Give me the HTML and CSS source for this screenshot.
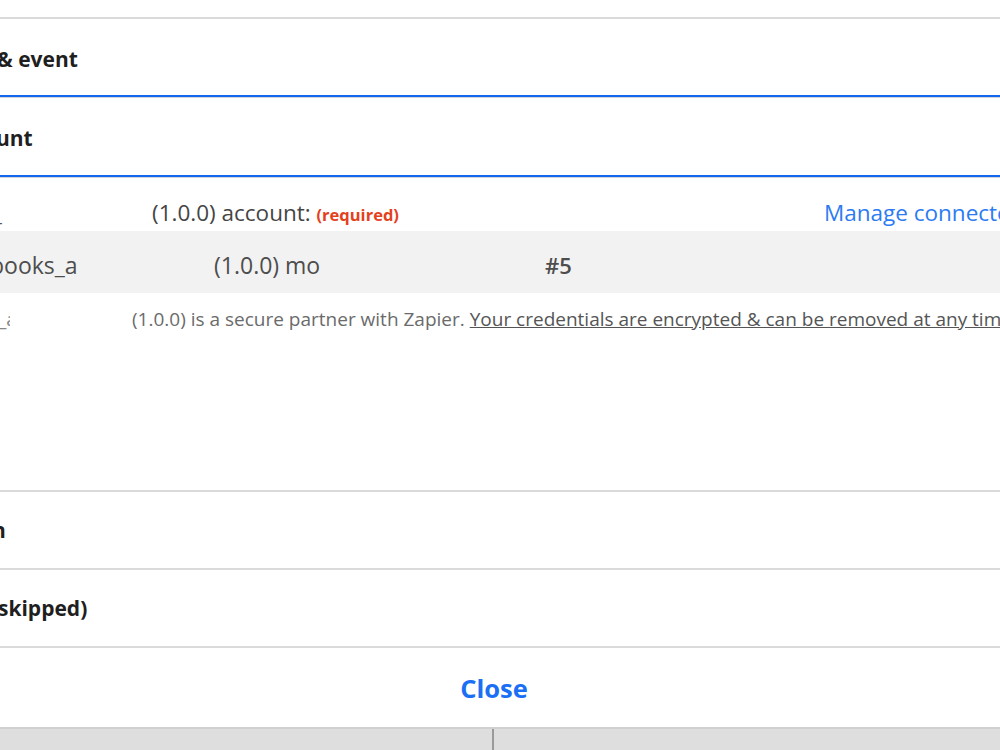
FILE: index.html
```html
<!DOCTYPE html>
<html>
<head>
    <title>Edit Step</title>
    <link rel="stylesheet" href="styles.css">
</head>
<body>
    <div class="modal">
        <div class="modal-top"></div>

        <!-- Step 1 -->
        <div class="step-head active"><span class="step-title t1">&amp; event</span></div>

        <!-- Step 2: account picker -->
        <div class="step-head active"><span class="step-title t2">unt</span></div>
        <div class="step-body">
            <div class="account-label">
                <span class="clip">_</span>
                <span class="label-text">(1.0.0) account: <span class="required">(required)</span></span>
                <a class="manage-link" href="#">Manage connected accounts</a>
            </div>
            <div class="account-row">
                <span class="acc-name">books_a</span>
                <span class="acc-version">(1.0.0) mo</span>
                <span class="acc-num">#5</span>
            </div>
            <div class="secure-note">
                <span class="frag">_a</span>
                <span class="note-text">(1.0.0) is a secure partner with Zapier. <u>Your credentials are encrypted &amp; can be removed at any time</u></span>
            </div>
        </div>

        <!-- Step 3 -->
        <div class="step-head"><span class="step-title t3">n</span></div>

        <!-- Step 4 -->
        <div class="step-head"><span class="step-title t4">skipped)</span></div>

        <div class="modal-footer">
            <button class="close-btn">Close</button>
        </div>
    </div>

    <div class="bottom-bar">
        <div class="bar-half"></div>
        <div class="bar-half"></div>
    </div>
</body>
</html>
```

FILE: styles.css
```css
/* General */
body {
    font-family: "Open Sans", Arial, sans-serif;
    margin: 0;
    padding: 0;
    background: white;
    overflow: hidden;
    height: 750px;
}

.modal {
    background: white;
}

.modal-top {
    height: 17px;
    border-bottom: 2px solid #dadada;
}

/* Step headers */
.step-head {
    height: 76px;
    display: flex;
    align-items: center;
    font-size: 21px;
    font-weight: bold;
    color: #1f1f1f;
    border-bottom: 2px solid #dadada;
    white-space: nowrap;
    overflow: hidden;
}

.step-head.active {
    border-bottom: 2px solid #1565f5;
    box-shadow: 0 1px 0 #d6d6d6;
    margin-bottom: 1px;
    padding-top: 4px;
    box-sizing: border-box;
    height: 78px;
}

.step-head.active + .step-head.active {
    height: 79px;
    padding-top: 2px;
}

/* titles are scrolled past the left edge of the panel */
.t1 { margin-left: -3px; }
.t2 { margin-left: -4px; }
.t3 { margin-left: -8px; }
.t4 { margin-left: -2px; }

/* Step body */
.step-body {
    height: 312px;
    border-bottom: 2px solid #dadada;
    white-space: nowrap;
    overflow: hidden;
}

.account-label {
    height: 53px;
    display: flex;
    align-items: center;
    font-size: 22.5px;
    color: #454545;
    box-sizing: border-box;
    padding-top: 16px;
}

.clip {
    margin-left: -8px;
    width: 160px;
    flex: none;
    color: #555;
}

.label-text {
    width: 672px;
    flex: none;
}

.required {
    color: #e5401c;
    font-size: 16.5px;
    font-weight: bold;
}

.manage-link {
    color: #2b7bf3;
    text-decoration: none;
    font-size: 22.5px;
    flex: none;
}

.account-row {
    height: 62px;
    background: #f2f2f2;
    display: flex;
    align-items: center;
    font-size: 23px;
    color: #4d4d4d;
    box-sizing: border-box;
    padding-top: 5px;
}

.acc-name {
    margin-left: -10px;
    width: 224px;
    flex: none;
}

.acc-version {
    width: 331px;
    flex: none;
}

.acc-num {
    font-size: 22px;
    font-weight: 600;
}

.secure-note {
    height: 52px;
    display: flex;
    align-items: center;
    font-size: 19px;
    color: #6b6b6b;
}

.frag {
    display: inline-block;
    width: 12px;
    margin-left: -2px;
    margin-right: 122px;
    overflow: hidden;
    color: #888;
    flex: none;
}

.note-text u {
    color: #555;
}

/* Footer */
.modal-footer {
    height: 79px;
    display: flex;
    align-items: center;
    justify-content: center;
    padding-right: 12px;
    box-sizing: border-box;
}

.close-btn {
    background: none;
    border: none;
    font-family: "Open Sans", Arial, sans-serif;
    font-size: 25.5px;
    font-weight: bold;
    color: #1a6ff5;
    cursor: pointer;
    padding: 0;
}

.bottom-bar {
    display: flex;
    height: 23px;
    border-top: 2px solid #d0d0d0;
    background: #dedede;
}

.bar-half {
    flex: 1;
}

.bar-half:first-child {
    border-right: 2px solid #9a9a9a;
    flex: 0 0 492px;
}
```
